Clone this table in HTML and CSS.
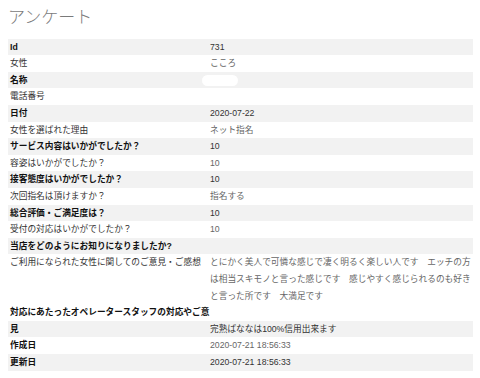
FILE: index.html
```html
<!DOCTYPE html>
<html lang="ja">
<head>
<meta charset="utf-8">
<title>アンケート</title>
<link rel="stylesheet" href="styles.css">
</head>
<body>
<div class="page">
  <h1 class="title">アンケート</h1>
  <div class="sheet">
    <div class="row shade strong"><div class="label">Id</div><div class="value">731</div></div>
    <div class="row"><div class="label">女性</div><div class="value">こころ</div></div>
    <div class="row shade strong"><div class="label">名称</div><div class="value"><span class="mask"></span></div></div>
    <div class="row"><div class="label">電話番号</div><div class="value"></div></div>
    <div class="row shade strong"><div class="label">日付</div><div class="value">2020-07-22</div></div>
    <div class="row"><div class="label">女性を選ばれた理由</div><div class="value">ネット指名</div></div>
    <div class="row shade strong"><div class="label">サービス内容はいかがでしたか？</div><div class="value">10</div></div>
    <div class="row"><div class="label">容姿はいかがでしたか？</div><div class="value">10</div></div>
    <div class="row shade strong"><div class="label">接客態度はいかがでしたか？</div><div class="value">10</div></div>
    <div class="row"><div class="label">次回指名は頂けますか？</div><div class="value">指名する</div></div>
    <div class="row shade strong"><div class="label">総合評価・ご満足度は？</div><div class="value">10</div></div>
    <div class="row"><div class="label">受付の対応はいかがでしたか？</div><div class="value">10</div></div>
    <div class="row shade strong"><div class="label">当店をどのようにお知りになりましたか?</div><div class="value"></div></div>
    <div class="row"><div class="label">ご利用になられた女性に関してのご意見・ご感想</div><div class="value">とにかく美人で可憐な感じで凄く明るく楽しい人です　エッチの方は相当スキモノと言った感じです　感じやすく感じられるのも好きと言った所です　大満足です</div></div>
    <div class="row half strong"><div class="label wide">対応にあたったオペレータースタッフの対応やご意見</div><div class="value bottom">完熟ばななは100%信用出来ます</div></div>
    <div class="row bold-label"><div class="label">作成日</div><div class="value">2020-07-21 18:56:33</div></div>
    <div class="row shade strong"><div class="label">更新日</div><div class="value">2020-07-21 18:56:33</div></div>
  </div>
</div>
</body>
</html>
```

FILE: styles.css
```css
html, body {
  margin: 0;
  padding: 0;
  background: #ffffff;
}

.page {
  padding: 4px 7px 0 8px;
  font-family: "Liberation Sans", "Noto Sans CJK JP", sans-serif;
}

.title {
  margin: 0 0 10.7px 0;
  font-family: "Noto Sans CJK JP", sans-serif;
  font-size: 17px;
  line-height: 24px;
  font-weight: 300;
  color: #7a7a7a;
}

.sheet {
  display: flex;
  flex-direction: column;
  font-size: 8.7px;
  line-height: 16.6px;
}

.row {
  display: grid;
  grid-template-columns: 200px 1fr;
  min-height: 16.6px;
}

.row.shade {
  background: #f2f2f2;
}

.row.half {
  background: linear-gradient(to bottom, transparent 16.6px, #f2f2f2 16.6px);
}

.label {
  padding-left: 2px;
  color: #333333;
}

.value {
  padding-left: 2px;
  color: #666666;
}

.row.strong .label,
.row.bold-label .label {
  font-weight: bold;
  color: #111111;
}

.row.strong .value {
  color: #333333;
}

.label.wide {
  margin-right: -8px;
}

.value.bottom {
  align-self: end;
}

.mask {
  display: inline-block;
  vertical-align: middle;
  width: 36px;
  height: 11px;
  margin-left: -8px;
  border-radius: 6px;
  background: #ffffff;
}
```
